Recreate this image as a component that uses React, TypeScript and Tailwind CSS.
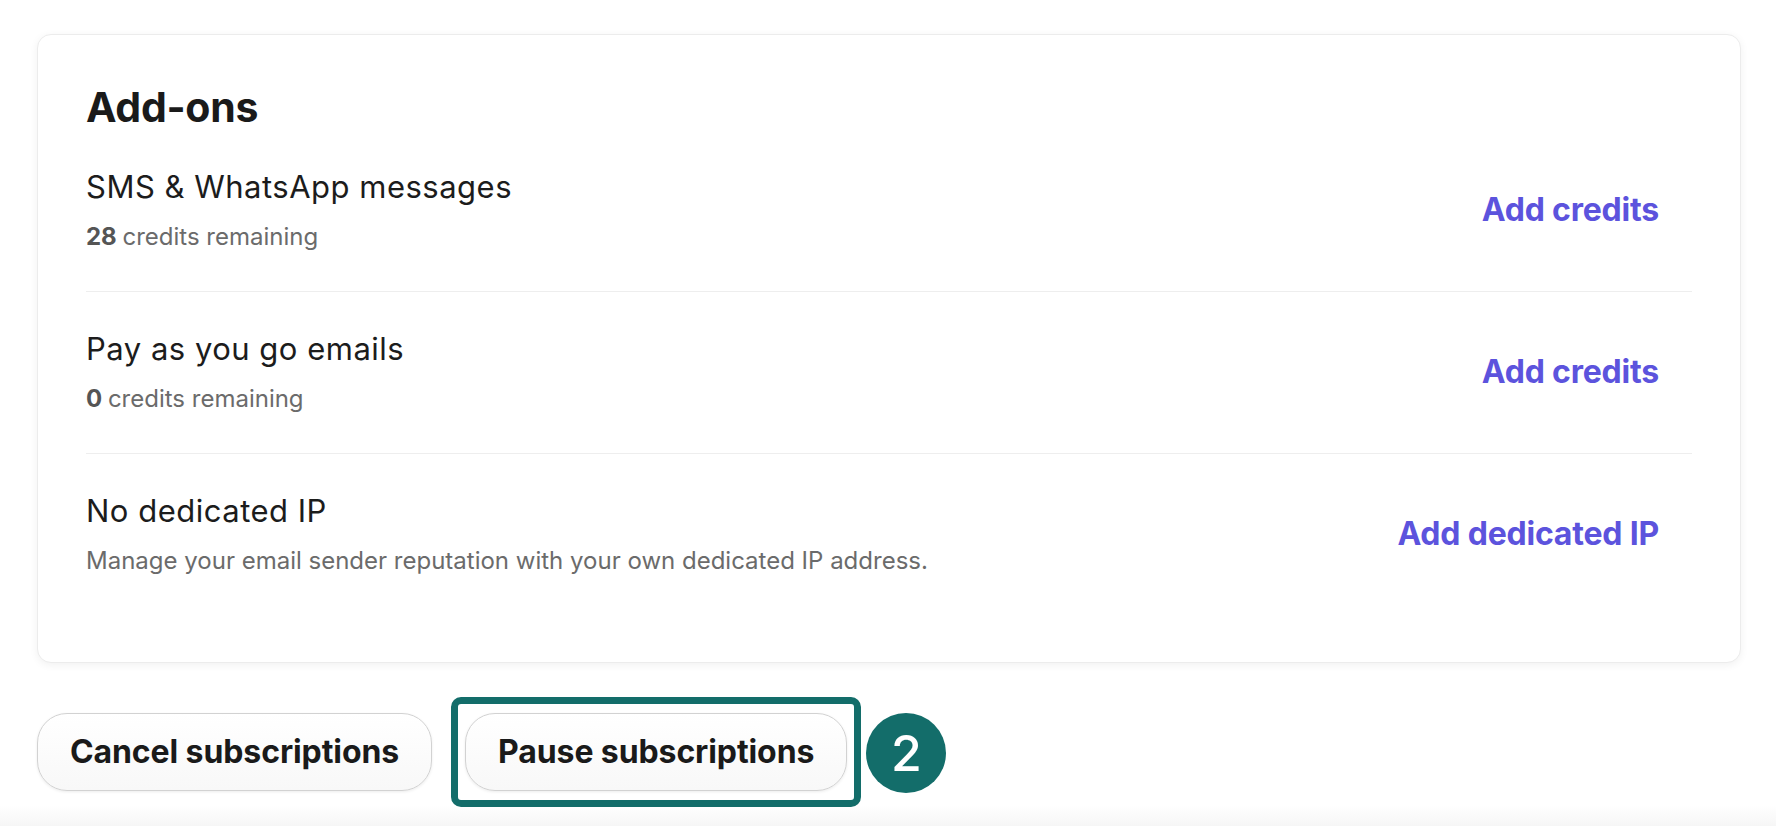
import React from "react";

type AddOn = {
  title: string;
  count?: string;
  detail: string;
  action: string;
};

const addOns: AddOn[] = [
  { title: "SMS & WhatsApp messages", count: "28", detail: "credits remaining", action: "Add credits" },
  { title: "Pay as you go emails", count: "0", detail: "credits remaining", action: "Add credits" },
  {
    title: "No dedicated IP",
    detail: "Manage your email sender reputation with your own dedicated IP address.",
    action: "Add dedicated IP",
  },
];

const PillButton: React.FC<{ label: string }> = ({ label }) => (
  <button className="h-[78px] px-[32px] rounded-[30px] border-[1.5px] border-[#d2d2d2] bg-gradient-to-b from-white to-[#f8f8f8] shadow-[0_1px_3px_rgba(0,0,0,0.08)] text-[32px] font-bold text-[#1a1a1a] tracking-[-0.1px]">
    {label}
  </button>
);

export default function App() {
  return (
    <div className="w-full h-[826px] bg-white flex flex-col font-['Inter','Liberation_Sans',sans-serif] overflow-hidden">
      {/* Add-ons card */}
      <div className="mt-[34px] ml-[37px] w-[1704px] bg-white border border-[#ececec] rounded-[14px] shadow-[0_2px_8px_rgba(0,0,0,0.06)] px-[48px] pt-[49px] pb-[47px]">
        <h2 className="text-[41px] leading-[46px] font-bold text-[#1a1a1a] tracking-[-0.3px]">Add-ons</h2>
        <div className="flex flex-col">
          {addOns.map((a, i) => (
            <div
              key={a.title}
              className={`flex items-center justify-between pt-[37px] pb-[38px] ${
                i < addOns.length - 1 ? "border-b border-[#eeeeee]" : ""
              }`}
            >
              <div className="flex flex-col">
                <div className="text-[31px] leading-[40px] text-[#1c1c1c] tracking-[0.5px]">{a.title}</div>
                <div className="mt-[14px] text-[24px] leading-[32px] text-[#6b6b6b]">
                  {a.count && <span className="font-bold text-[#555555]">{a.count} </span>}
                  {a.detail}
                </div>
              </div>
              <button className="pr-[33px] text-[32px] font-bold text-[#5c53dd] tracking-[-0.2px]">
                {a.action}
              </button>
            </div>
          ))}
        </div>
      </div>

      {/* Actions */}
      <div className="mt-[50px] ml-[37px] flex items-center gap-[33px]">
        <PillButton label="Cancel subscriptions" />
        <div className="relative">
          <PillButton label="Pause subscriptions" />
          <div className="absolute -left-[14px] -top-[16px] -right-[14px] -bottom-[16px] border-[7px] border-[#136d6a] rounded-[10px] pointer-events-none" />
          <div className="absolute left-[calc(100%+19px)] top-0 w-[80px] h-[80px] rounded-full bg-[#136d6a] flex items-center justify-center text-white text-[50px] font-medium leading-none">
            2
          </div>
        </div>
      </div>

      <div className="flex-1 bg-[linear-gradient(to_bottom,rgba(255,255,255,0)_40%,#f6f6f6_100%)]" />
    </div>
  );
}
